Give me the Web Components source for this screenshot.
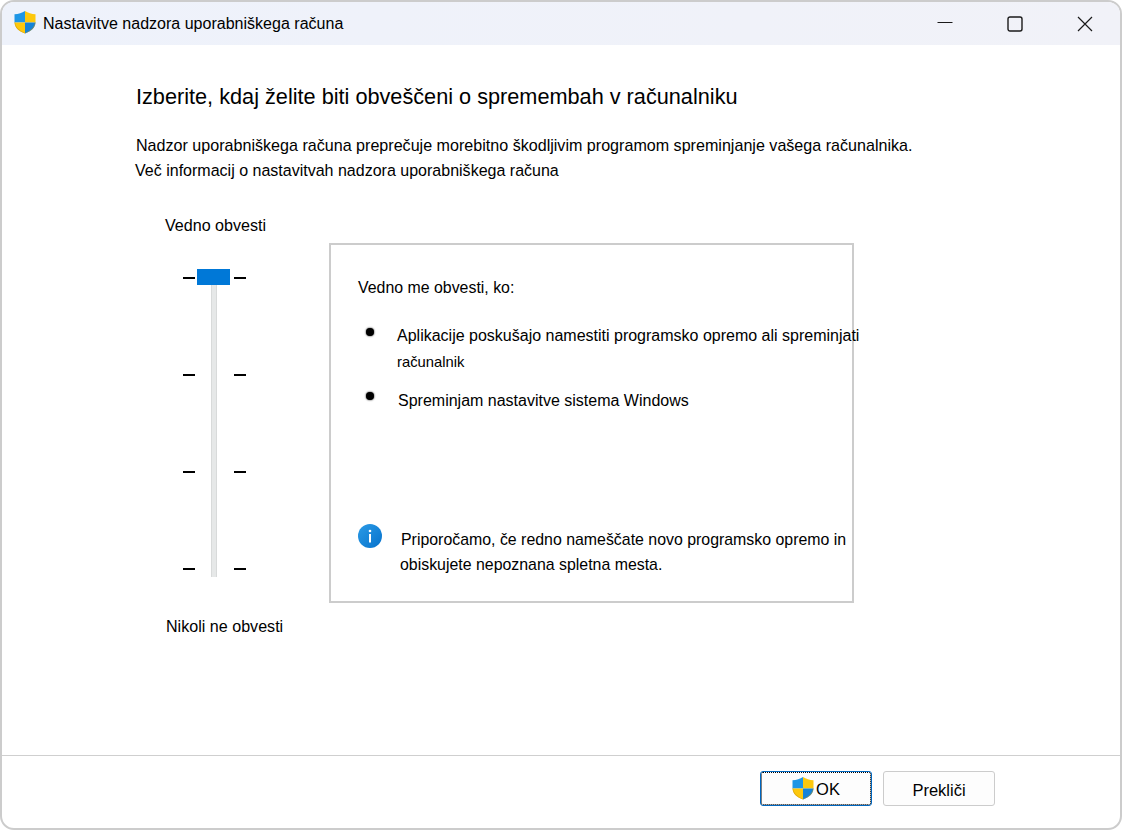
<!DOCTYPE html>
<html lang="sl">
<head>
<meta charset="utf-8">
<title>Nastavitve nadzora uporabniškega računa</title>
<style>
  html, body { margin: 0; height: 100%; background: #fff; }
  body { font: 16.1px "Liberation Sans", Arial, sans-serif; color: #000; }
</style>
</head>
<body>
<uac-window>
  <uac-titlebar slot="title">Nastavitve nadzora uporabniškega računa</uac-titlebar>
  <uac-intro>
    <span slot="heading">Izberite, kdaj želite biti obveščeni o spremembah v računalniku</span>
    <span slot="lead">Nadzor uporabniškega računa preprečuje morebitno škodljivim programom spreminjanje vašega računalnika.</span>
    <span slot="link">Več informacij o nastavitvah nadzora uporabniškega računa</span>
  </uac-intro>
  <uac-level-row>
    <uac-slider top="Vedno obvesti" bottom="Nikoli ne obvesti" slot="slider"></uac-slider>
    <uac-panel slot="panel">
      <span slot="title">Vedno me obvesti, ko:</span>
      <uac-bullet>Aplikacije poskušajo namestiti programsko opremo ali spreminjati<br><small>računalnik</small></uac-bullet>
      <uac-bullet second>Spreminjam nastavitve sistema Windows</uac-bullet>
      <span slot="note">Priporočamo, če redno nameščate novo programsko opremo in<br><span style="margin-left:-1px">obiskujete nepoznana spletna mesta.</span></span>
    </uac-panel>
  </uac-level-row>
  <uac-footer slot="footer">
    <uac-button default shield>OK</uac-button>
    <uac-button>Prekliči</uac-button>
  </uac-footer>
</uac-window>

<script>
const shieldSvg = size => `
  <svg width="${size}" height="${size}" viewBox="0 0 24 24" aria-hidden="true">
    <defs><clipPath id="sh"><path d="M12 1C9 3 5.500 4 1.500 4.200V12c0 5.500 4 9 10.500 11.500C18.500 21 22.500 17.500 22.500 12V4.200C18.500 4 15 3 12 1z"/></clipPath></defs>
    <g clip-path="url(#sh)">
      <rect width="12" height="12.500" fill="#1e96e6"/>
      <rect x="12" width="12" height="12.500" fill="#fdc80c"/>
      <rect y="12.500" width="12" height="12" fill="#fdc80c"/>
      <rect x="12" y="12.500" width="12" height="12" fill="#1583d8"/>
      <path d="M1.500 12c0 5.500 4 9 10.500 11.500C18.500 21 22.500 17.500 22.500 12" fill="none" stroke="#c8920a" stroke-width="1.200" opacity=".55"/>
    </g>
  </svg>`

window.customElements.define('uac-window', class extends HTMLElement {
  constructor() {
    super()
    let shadow = this.attachShadow({ mode: 'open' })
    shadow.innerHTML = `
      <style>
        :host {
          display: flex;
          flex-direction: column;
          box-sizing: border-box;
          width: 1122px;
          height: 830px;
          border: 2px solid #cccccc;
          border-radius: 14px;
          overflow: hidden;
          background: #fff;
        }
        main { flex: 1; min-height: 0; }
      </style>
      <slot name="title"></slot>
      <main><slot></slot></main>
      <slot name="footer"></slot>
    `
  }
})

window.customElements.define('uac-titlebar', class extends HTMLElement {
  constructor() {
    super()
    let shadow = this.attachShadow({ mode: 'open' })
    shadow.innerHTML = `
      <style>
        :host {
          display: flex;
          align-items: center;
          height: 43px;
          padding-left: 11px;
          background: linear-gradient(90deg, #eef2fb, #f1f2f8);
          font-size: 16.05px;
        }
        .shield { display: flex; margin-right: 6px; margin-top: -3px; }
        .text { flex: 1; }
        .controls { display: flex; }
        .controls div { width: 70px; height: 43px; display: flex; align-items: center; justify-content: center; }
        svg { display: block; }
      </style>
      <span class="shield">${shieldSvg(24)}</span>
      <span class="text"><slot></slot></span>
      <div class="controls">
        <div><svg width="16" height="16" viewBox="0 0 16 16"><path d="M0.500 6.500h15" stroke="#1a1a1a" stroke-width="1"/></svg></div>
        <div><svg width="16" height="16" viewBox="0 0 16 16"><rect x="1" y="1" width="14" height="14" rx="2" fill="none" stroke="#1a1a1a" stroke-width="1.400"/></svg></div>
        <div><svg width="16" height="16" viewBox="0 0 16 16"><path d="M1 1l14 14M15 1L1 15" stroke="#1a1a1a" stroke-width="1.200"/></svg></div>
      </div>
    `
  }
})

window.customElements.define('uac-intro', class extends HTMLElement {
  constructor() {
    super()
    let shadow = this.attachShadow({ mode: 'open' })
    shadow.innerHTML = `
      <style>
        :host { display: block; padding: 41px 0 0 134px; }
        .heading { font-size: 21.7px; line-height: 22px; margin-bottom: 25px; }
        .lead { line-height: 25px; }
        .link { line-height: 25px; margin-left: -1px; font-size: 16.03px; }
      </style>
      <div class="heading"><slot name="heading"></slot></div>
      <div class="lead"><slot name="lead"></slot></div>
      <div class="link"><slot name="link"></slot></div>
    `
  }
})

window.customElements.define('uac-level-row', class extends HTMLElement {
  constructor() {
    super()
    let shadow = this.attachShadow({ mode: 'open' })
    shadow.innerHTML = `
      <style>
        :host { display: flex; align-items: flex-start; padding: 32px 0 0 163px; }
        .panel { margin: 28px 0 0 0; }
      </style>
      <slot name="slider"></slot>
      <div class="panel"><slot name="panel"></slot></div>
    `
  }
})

window.customElements.define('uac-slider', class extends HTMLElement {
  constructor() {
    super()
    let shadow = this.attachShadow({ mode: 'open' })
    let ticks = ''
    for (let i = 0; i < 4; i++) ticks += `<div class="tick"><i></i><i></i></div>`
    shadow.innerHTML = `
      <style>
        :host { display: block; width: 164px; flex: none; }
        .label { line-height: 20px; }
        .bottom { margin: 46px 0 0 1px; }
        .scale {
          position: relative;
          display: flex;
          flex-direction: column;
          justify-content: space-between;
          width: 63px;
          height: 293px;
          margin: 42px 0 0 18px;
        }
        .tick { display: flex; justify-content: space-between; align-items: center; height: 2px; }
        .tick i { display: block; width: 12px; height: 2px; background: #000; }
        .track {
          position: absolute;
          left: 28px;
          top: 8px;
          bottom: -7px;
          width: 6px;
          background: #e6e8e8;
          border: solid #d8dada;
          border-width: 0 1px;
          box-sizing: border-box;
        }
        .thumb {
          position: absolute;
          left: 14px;
          top: -8px;
          width: 33px;
          height: 16px;
          background: #0078d7;
        }
      </style>
      <div class="label">${this.getAttribute('top')}</div>
      <div class="scale">
        ${ticks}
        <div class="track"></div>
        <div class="thumb"></div>
      </div>
      <div class="label bottom">${this.getAttribute('bottom')}</div>
    `
  }
})

window.customElements.define('uac-panel', class extends HTMLElement {
  constructor() {
    super()
    let shadow = this.attachShadow({ mode: 'open' })
    shadow.innerHTML = `
      <style>
        :host {
          display: flex;
          flex-direction: column;
          box-sizing: border-box;
          width: 525px;
          height: 360px;
          border: 2px solid #cccccc;
          padding: 0 0 0 27px;
          white-space: nowrap;
          font-size: 15.9px;
        }
        .title { line-height: 20px; margin-top: 33px; margin-bottom: 25px; }
        .list { flex: 1; }
        .note { display: flex; line-height: 25px; margin-bottom: 24px; }
        .note svg { flex: none; margin: -3px 19px 0 0; display: block; }
      </style>
      <div class="title"><slot name="title"></slot></div>
      <div class="list"><slot></slot></div>
      <div class="note">
        <svg width="24" height="24" viewBox="0 0 24 24">
          <defs><linearGradient id="ig" x1="0" y1="0" x2="1" y2="1"><stop offset="0" stop-color="#2b9be6"/><stop offset="1" stop-color="#0672cc"/></linearGradient></defs>
          <circle cx="12" cy="12" r="12" fill="url(#ig)"/>
          <rect x="11" y="10" width="2" height="8.500" fill="#fff"/>
          <circle cx="12" cy="7" r="1.300" fill="#fff"/>
        </svg>
        <div><slot name="note"></slot></div>
      </div>
    `
  }
})

window.customElements.define('uac-bullet', class extends HTMLElement {
  constructor() {
    super()
    let shadow = this.attachShadow({ mode: 'open' })
    shadow.innerHTML = `
      <style>
        :host { display: flex; line-height: 26px; margin-bottom: 13px; font-size: 16px; }
        :host([second]) { padding-left: 2px; }
        .dot {
          flex: none;
          width: 8px;
          height: 8px;
          margin: 5px 23px 0 8px;
          border-radius: 50%;
          background: #000;
          box-shadow: 0 0 2px #000;
        }
        :host([second]) .dot { margin: 4px 24px 0 6px; }
        ::slotted(small) { font-size: 14.800px; }
      </style>
      <span class="dot"></span>
      <div><slot></slot></div>
    `
  }
})

window.customElements.define('uac-footer', class extends HTMLElement {
  constructor() {
    super()
    let shadow = this.attachShadow({ mode: 'open' })
    shadow.innerHTML = `
      <style>
        :host {
          display: flex;
          justify-content: flex-end;
          gap: 11px;
          box-sizing: border-box;
          height: 73px;
          border-top: 1px solid #cfcfcf;
          padding: 15px 125px 0 0;
        }
      </style>
      <slot></slot>
    `
  }
})

window.customElements.define('uac-button', class extends HTMLElement {
  constructor() {
    super()
    let shadow = this.attachShadow({ mode: 'open' })
    shadow.innerHTML = `
      <style>
        :host {
          display: flex;
          align-items: center;
          justify-content: center;
          box-sizing: border-box;
          width: 112px;
          height: 35px;
          border: 1px solid #cccccc;
          border-radius: 3px;
          background: #fdfdfd;
          font-size: 16.500px;
        }
        :host([default]) {
          border: 1px solid #0067c0;
          outline: 1px dotted #000;
          outline-offset: -2px;
        }
        .shield { display: none; }
        :host([shield]) .shield { display: flex; margin: -2px 1px 0 -1px; }
        .text { padding-top: 4px; }
        :host([default]) .text { padding-top: 2px; }
      </style>
      <span class="shield">${shieldSvg(24)}</span>
      <span class="text"><slot></slot></span>
    `
  }
})
</script>
</body>
</html>
